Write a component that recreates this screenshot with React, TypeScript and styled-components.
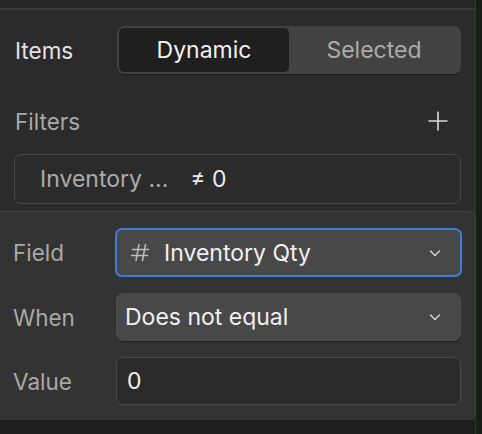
import styled, { createGlobalStyle } from "styled-components"

const GlobalStyle = createGlobalStyle`
    html, body {
        margin: 0;
        padding: 0;
        background: #1b1f19;
    }
    body {
        font-family: Inter, "Noto Sans", sans-serif;
        -webkit-font-smoothing: antialiased;
    }
`

const Screen = styled.div`
    display: grid;
    grid-template-columns: 476px 1fr;
    width: 482px;
    height: 434px;
    overflow: hidden;
`

const Canvas = styled.div`
    background: #1a1e18;
`

const Sidebar = styled.div`
    display: flex;
    flex-direction: column;
    background: #2b2b2b;
    border-right: 1px solid #353535;
`

const TopStrip = styled.div`
    height: 8px;
    background: #262626;
    border-bottom: 2px solid #3b3b3b;
`

const Section = styled.div`
    display: flex;
    flex-direction: column;
    padding: 16px 14px 7px 14px;
`

const Row = styled.div`
    display: flex;
    align-items: center;
    justify-content: space-between;
`

const Label = styled.span<{ $dim?: boolean }>`
    font-size: 22.5px;
    color: ${p => (p.$dim ? "#a9a9a9" : "#e4e4e4")};
    padding-left: 1px;
`

const Segmented = styled.div`
    display: grid;
    grid-template-columns: 1fr 1fr;
    width: 344px;
    height: 48px;
    box-sizing: border-box;
    padding: 2px;
    background: #424242;
    border-radius: 7px;
    box-shadow: 0 1px 1px rgba(0, 0, 0, 0.35);
`

const SegButton = styled.div<{ $active?: boolean }>`
    display: flex;
    align-items: center;
    justify-content: center;
    font-size: 23px;
    border-radius: 5px;
    color: ${p => (p.$active ? "#f2f2f2" : "#ababab")};
    background: ${p => (p.$active ? "#1f1f1f" : "transparent")};
`

const FiltersRow = styled(Row)`
    margin-top: 32px;
    height: 30px;
`

const PlusButton = styled.div`
    display: flex;
    width: 24px;
    height: 24px;
    align-items: center;
    justify-content: center;
    margin-right: 11px;
`

const FilterChip = styled.div`
    display: flex;
    align-items: center;
    gap: 22px;
    margin-top: 18px;
    height: 50px;
    box-sizing: border-box;
    padding: 0 25px;
    border: 1px solid #474747;
    border-radius: 7px;
    font-size: 23px;
`

const ChipField = styled.span`
    color: #ababab;
`

const ChipValue = styled.span`
    color: #ececec;
`

const Popover = styled.div`
    display: flex;
    flex-direction: column;
    gap: 16px;
    margin-right: -1px;
    padding: 16px 13px 15px 12px;
    background: #333333;
    border-top: 1px solid #464646;
    border-right: 1px solid #404040;
    border-radius: 0 8px 8px 0;
`

const FieldRow = styled.div`
    display: grid;
    grid-template-columns: 103px 1fr;
    align-items: center;
`

const Select = styled.div<{ $focused?: boolean }>`
    display: flex;
    align-items: center;
    height: ${p => (p.$focused ? "49px" : "48px")};
    box-sizing: border-box;
    padding: 0 18px 0 8px;
    font-size: 23px;
    color: #f0f0f0;
    background: #484848;
    border-radius: 7px;
    border: ${p => (p.$focused ? "2px solid #3b7ddd" : "1px solid #4d4d4d")};
    box-shadow: ${p => (p.$focused ? "none" : "0 1px 1px rgba(0,0,0,0.4)")};
    margin-right: ${p => (p.$focused ? "0" : "1px")};
    margin-left: ${p => (p.$focused ? "0" : "1px")};
`

const SelectText = styled.span`
    flex: 1;
`

const TypeIcon = styled.span`
    display: flex;
    margin: 0 14px 0 5px;
`

const ValueInput = styled.div`
    display: flex;
    align-items: center;
    height: 48px;
    box-sizing: border-box;
    margin: 0 1px;
    padding: 0 10px;
    font-size: 23px;
    color: #f0f0f0;
    background: #2a2a2a;
    border: 1px solid #484848;
    border-radius: 7px;
`

const BottomStrip = styled.div`
    flex: 1;
    background: #1f1f1f;
`

const Chevron = () => (
    <svg width="14" height="14" viewBox="0 0 14 14" fill="none">
        <path d="M2.5 5L7 9.5L11.5 5" stroke="#cfcfcf" strokeWidth="1.5" strokeLinecap="round" strokeLinejoin="round" />
    </svg>
)

const Plus = () => (
    <svg width="22" height="22" viewBox="0 0 22 22" fill="none">
        <path d="M11 1.5V20.5M1.5 11H20.5" stroke="#dcdcdc" strokeWidth="1.6" />
    </svg>
)

// number field type glyph, slanted hash
const HashIcon = () => (
    <svg width="20" height="19" viewBox="0 0 20 19" fill="none">
        <path d="M9 1.5L6 17.5M15.5 1.5L12.5 17.5M2.5 6.5H18.5M1.5 12.5H17.5" stroke="#bdbdbd" strokeWidth="1.5" strokeLinecap="round" />
    </svg>
)

export default function App() {
    return (
        <>
            <GlobalStyle />
            <Screen>
                <Sidebar>
                    <TopStrip />
                    <Section>
                        <Row>
                            <Label>Items</Label>
                            <Segmented>
                                <SegButton $active>Dynamic</SegButton>
                                <SegButton>Selected</SegButton>
                            </Segmented>
                        </Row>

                        <FiltersRow>
                            <Label $dim>Filters</Label>
                            <PlusButton><Plus /></PlusButton>
                        </FiltersRow>

                        <FilterChip>
                            <ChipField>Inventory ...</ChipField>
                            <ChipValue>≠ 0</ChipValue>
                        </FilterChip>
                    </Section>

                    {/* filter editor popover */}
                    <Popover>
                        <FieldRow>
                            <Label $dim>Field</Label>
                            <Select $focused>
                                <TypeIcon><HashIcon /></TypeIcon>
                                <SelectText>Inventory Qty</SelectText>
                                <Chevron />
                            </Select>
                        </FieldRow>
                        <FieldRow>
                            <Label $dim>When</Label>
                            <Select>
                                <SelectText>Does not equal</SelectText>
                                <Chevron />
                            </Select>
                        </FieldRow>
                        <FieldRow>
                            <Label $dim>Value</Label>
                            <ValueInput>0</ValueInput>
                        </FieldRow>
                    </Popover>
                    <BottomStrip />
                </Sidebar>
                <Canvas />
            </Screen>
        </>
    )
}
